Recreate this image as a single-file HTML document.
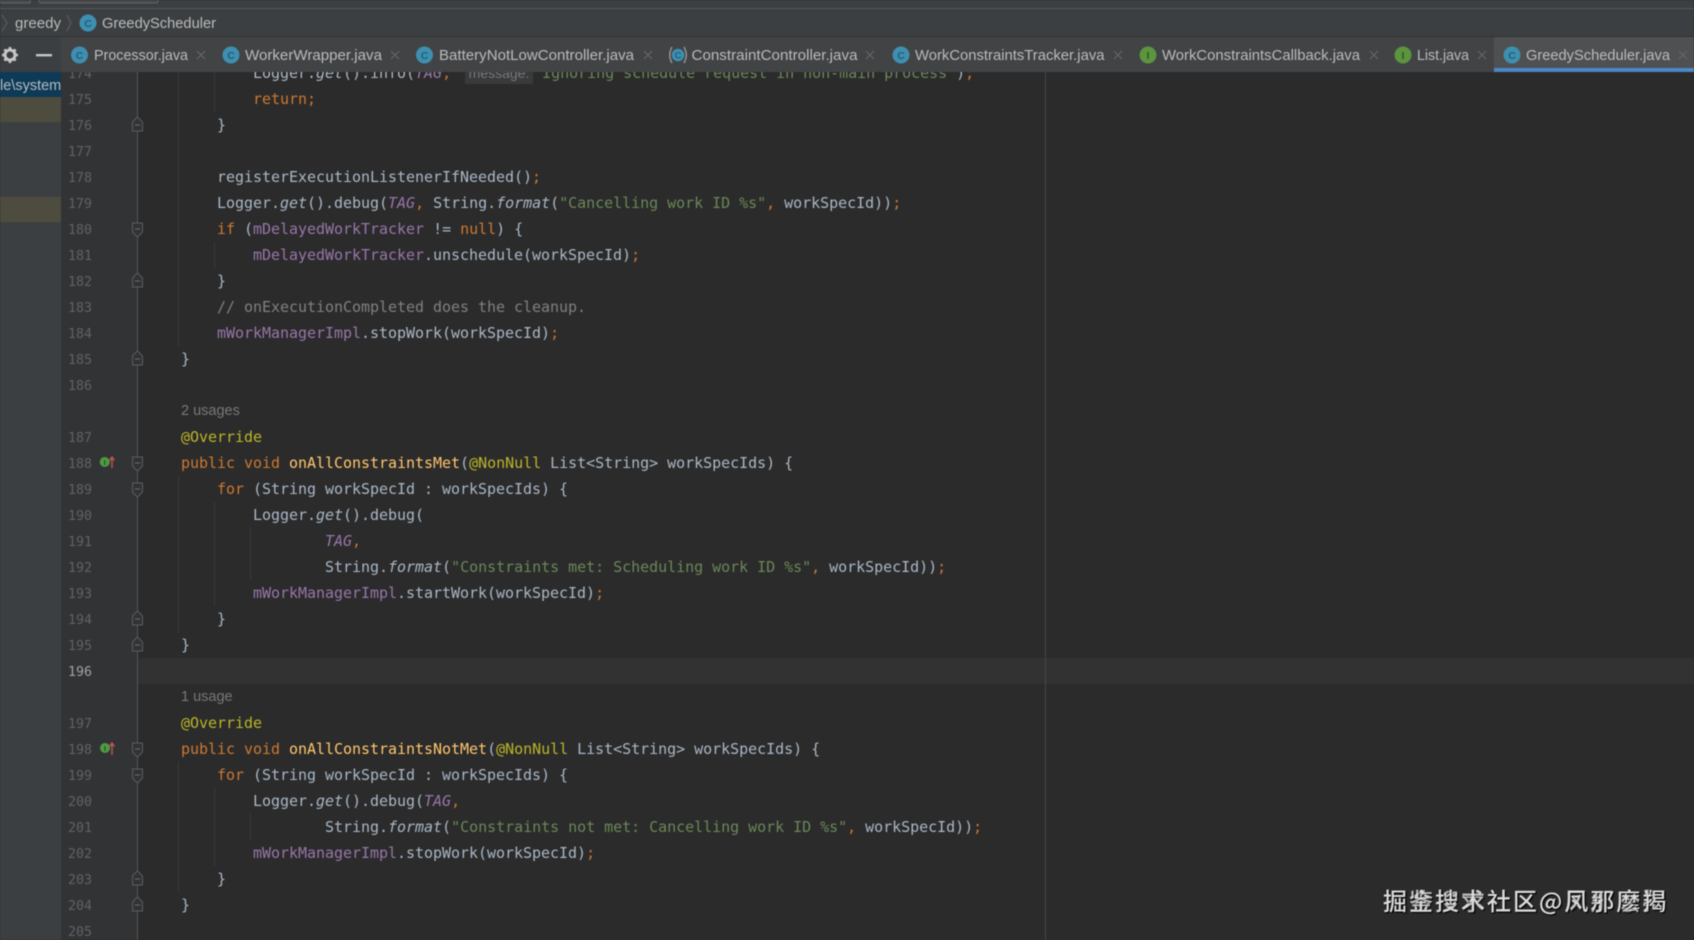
<!DOCTYPE html>
<html><head><meta charset="utf-8"><style>
html,body{margin:0;padding:0;background:#2b2b2b}
#r{position:relative;width:1694px;height:940px;overflow:hidden;background:#2b2b2b;filter:blur(.45px)}
.b{position:absolute}
pre{margin:0}
.l{position:absolute;left:181px;height:26px;font:15px/26px "DejaVu Sans Mono","Liberation Mono",monospace;letter-spacing:-.03px;color:#a9b7c6;white-space:pre}
.n{position:absolute;left:60px;width:32px;margin-top:2px;text-align:right;font:13.3px/26px "DejaVu Sans Mono","Liberation Mono",monospace;color:#606366}
.k{color:#cc7832}.s{color:#6a8759}.f{color:#9876aa}.t{color:#9876aa;font-style:italic}.i{font-style:italic}.m{color:#ffc66d}.a{color:#bbb529}.c{color:#808080}
.u{position:absolute;left:181px;font:14.5px/26px "Liberation Sans",sans-serif;color:#787878}
svg{position:absolute;left:0;top:0}
svg text{font-family:"Liberation Sans",sans-serif}
.wm{position:absolute;left:1383px;top:885px;font:500 24px/30px "Noto Sans CJK SC","WenQuanYi Zen Hei",sans-serif;color:#dcdcdc;white-space:pre;text-shadow:1px 1px 1px #000;letter-spacing:2px}
</style></head><body><div id="r">
<div class="b" style="left:137px;top:658px;width:1557px;height:26px;background:#323232"></div>
<div class="b" style="left:61px;top:72px;width:76px;height:868px;background:#313335"></div>
<div class="b" style="left:0;top:72px;width:61px;height:868px;background:#3c3f41"></div>
<div class="b" style="left:0;top:72px;width:61px;height:25px;background:#0d3a56"></div>
<div class="b" style="left:0;top:97px;width:61px;height:25px;background:#4d4c3e"></div>
<div class="b" style="left:0;top:197px;width:61px;height:25px;background:#4d4c3e"></div>
<div class="b" style="left:0;top:74px;width:61px;height:25px;font:14.5px/25px 'Liberation Sans',sans-serif;color:#b5bcc2;text-align:right;overflow:hidden;white-space:nowrap"><span>le\system</span></div>
<div class="b" style="left:1045px;top:72px;width:1px;height:868px;background:#464646"></div>
<div class="b" style="left:178px;top:72px;width:1px;height:274px;background:#393939"></div>
<div class="b" style="left:214px;top:72px;width:1px;height:40px;background:#393939"></div>
<div class="b" style="left:214px;top:242px;width:1px;height:26px;background:#393939"></div>
<div class="b" style="left:178px;top:476px;width:1px;height:157px;background:#393939"></div>
<div class="b" style="left:214px;top:502px;width:1px;height:104px;background:#393939"></div>
<div class="b" style="left:250px;top:528px;width:1px;height:52px;background:#393939"></div>
<div class="b" style="left:178px;top:762px;width:1px;height:131px;background:#393939"></div>
<div class="b" style="left:214px;top:788px;width:1px;height:78px;background:#393939"></div>
<div class="b" style="left:250px;top:814px;width:1px;height:26px;background:#393939"></div>

<div class="n" style="top:60px">174</div><div class="n" style="top:86px">175</div><div class="n" style="top:112px">176</div><div class="n" style="top:138px">177</div><div class="n" style="top:164px">178</div><div class="n" style="top:190px">179</div><div class="n" style="top:216px">180</div><div class="n" style="top:242px">181</div><div class="n" style="top:268px">182</div><div class="n" style="top:294px">183</div><div class="n" style="top:320px">184</div><div class="n" style="top:346px">185</div><div class="n" style="top:372px">186</div>
<div class="n" style="top:424px">187</div><div class="n" style="top:450px">188</div><div class="n" style="top:476px">189</div><div class="n" style="top:502px">190</div><div class="n" style="top:528px">191</div><div class="n" style="top:554px">192</div><div class="n" style="top:580px">193</div><div class="n" style="top:606px">194</div><div class="n" style="top:632px">195</div><div class="n" style="top:658px;color:#a4a3a3">196</div>
<div class="n" style="top:710px">197</div><div class="n" style="top:736px">198</div><div class="n" style="top:762px">199</div><div class="n" style="top:788px">200</div><div class="n" style="top:814px">201</div><div class="n" style="top:840px">202</div><div class="n" style="top:866px">203</div><div class="n" style="top:892px">204</div><div class="n" style="top:918px">205</div>

<pre class="l" style="top:60px">        Logger.<span class="i">get</span>().info(<span class="t">TAG</span><span class="k">,</span> <span style="display:inline-block;width:64px"></span> <span class="s">"Ignoring schedule request in non-main process"</span>)<span class="k">;</span></pre>
<div class="b" style="left:465px;top:62px;width:68px;height:22px;background:#3a3a3a;color:#787878;font:14px/22px 'Liberation Sans',sans-serif;text-align:center">message:</div>
<pre class="l" style="top:86px">        <span class="k">return;</span></pre>
<pre class="l" style="top:112px">    }</pre>
<pre class="l" style="top:164px">    registerExecutionListenerIfNeeded()<span class="k">;</span></pre>
<pre class="l" style="top:190px">    Logger.<span class="i">get</span>().debug(<span class="t">TAG</span><span class="k">,</span> String.<span class="i">format</span>(<span class="s">"Cancelling work ID %s"</span><span class="k">,</span> workSpecId))<span class="k">;</span></pre>
<pre class="l" style="top:216px">    <span class="k">if</span> (<span class="f">mDelayedWorkTracker</span> != <span class="k">null</span>) {</pre>
<pre class="l" style="top:242px">        <span class="f">mDelayedWorkTracker</span>.unschedule(workSpecId)<span class="k">;</span></pre>
<pre class="l" style="top:268px">    }</pre>
<pre class="l" style="top:294px">    <span class="c">// onExecutionCompleted does the cleanup.</span></pre>
<pre class="l" style="top:320px">    <span class="f">mWorkManagerImpl</span>.stopWork(workSpecId)<span class="k">;</span></pre>
<pre class="l" style="top:346px">}</pre>
<div class="u" style="top:398px">2 usages</div>
<pre class="l" style="top:424px"><span class="a">@Override</span></pre>
<pre class="l" style="top:450px"><span class="k">public void</span> <span class="m">onAllConstraintsMet</span>(<span class="a">@NonNull</span> List&lt;String&gt; workSpecIds) {</pre>
<pre class="l" style="top:476px">    <span class="k">for</span> (String workSpecId : workSpecIds) {</pre>
<pre class="l" style="top:502px">        Logger.<span class="i">get</span>().debug(</pre>
<pre class="l" style="top:528px">                <span class="t">TAG</span><span class="k">,</span></pre>
<pre class="l" style="top:554px">                String.<span class="i">format</span>(<span class="s">"Constraints met: Scheduling work ID %s"</span><span class="k">,</span> workSpecId))<span class="k">;</span></pre>
<pre class="l" style="top:580px">        <span class="f">mWorkManagerImpl</span>.startWork(workSpecId)<span class="k">;</span></pre>
<pre class="l" style="top:606px">    }</pre>
<pre class="l" style="top:632px">}</pre>
<div class="u" style="top:684px">1 usage</div>
<pre class="l" style="top:710px"><span class="a">@Override</span></pre>
<pre class="l" style="top:736px"><span class="k">public void</span> <span class="m">onAllConstraintsNotMet</span>(<span class="a">@NonNull</span> List&lt;String&gt; workSpecIds) {</pre>
<pre class="l" style="top:762px">    <span class="k">for</span> (String workSpecId : workSpecIds) {</pre>
<pre class="l" style="top:788px">        Logger.<span class="i">get</span>().debug(<span class="t">TAG</span><span class="k">,</span></pre>
<pre class="l" style="top:814px">                String.<span class="i">format</span>(<span class="s">"Constraints not met: Cancelling work ID %s"</span><span class="k">,</span> workSpecId))<span class="k">;</span></pre>
<pre class="l" style="top:840px">        <span class="f">mWorkManagerImpl</span>.stopWork(workSpecId)<span class="k">;</span></pre>
<pre class="l" style="top:866px">    }</pre>
<pre class="l" style="top:892px">}</pre>

<svg width="1694" height="940" viewBox="0 0 1694 940">
<rect x="0" y="0" width="1694" height="37" fill="#3c3f41"/>
<rect x="0" y="8" width="1694" height="1" fill="#555759"/>
<rect x="0" y="36" width="1694" height="1" fill="#2f3132"/>
<path d="M0 0V1.5Q0 3 2 3H30V0M39 0V1Q39 3 42 3H156Q158 3 158 1V0" fill="#46484a" stroke="#636567"/>
<path d="M2 15L7 23L2 31" fill="none" stroke="#5e6163"/>
<path d="M67 15L71 23L67 31" fill="none" stroke="#5e6163"/>
<text x="15" y="28" font-size="15" fill="#bbbbbb" textLength="46" lengthAdjust="spacingAndGlyphs">greedy</text>
<circle cx="88" cy="23" r="8.5" fill="#3f8fb0"/><text x="88" y="27" font-size="10.5" font-weight="bold" fill="#205f7c" text-anchor="middle">C</text>
<text x="102" y="28" font-size="15" fill="#bbbbbb" textLength="114" lengthAdjust="spacingAndGlyphs">GreedyScheduler</text>
<rect x="0" y="37" width="1694" height="35" fill="#3c3f41"/>
<rect x="61" y="37" width="1633" height="35" fill="#414345"/>
<rect x="1494" y="37" width="200" height="31" fill="#4e5052"/>
<rect x="1494" y="68" width="200" height="4" fill="#4a88c7"/>
<g transform="translate(10,55)"><circle r="5" fill="none" stroke="#c4c6c8" stroke-width="3"/><g stroke="#c4c6c8" stroke-width="2.6"><path d="M0-8V-5M0 5V8M-8 0H-5M5 0H8M-5.6-5.6L-3.6-3.6M3.6 3.6L5.6 5.6M-5.6 5.6L-3.6 3.6M3.6-3.6L5.6-5.6"/></g></g>
<rect x="36" y="54" width="16" height="2.4" fill="#c4c6c8"/>
<g font-size="15" fill="#b9bbbd">
<circle cx="79.5" cy="55" r="8.5" fill="#3f8fb0"/><text x="79.5" y="59" font-size="10.5" font-weight="bold" fill="#205f7c" text-anchor="middle">C</text>
<text x="94" y="60" textLength="94" lengthAdjust="spacingAndGlyphs">Processor.java</text>
<circle cx="231" cy="55" r="8.5" fill="#3f8fb0"/><text x="231" y="59" font-size="10.5" font-weight="bold" fill="#205f7c" text-anchor="middle">C</text>
<text x="245" y="60" textLength="137" lengthAdjust="spacingAndGlyphs">WorkerWrapper.java</text>
<circle cx="424.5" cy="55" r="8.5" fill="#3f8fb0"/><text x="424.5" y="59" font-size="10.5" font-weight="bold" fill="#205f7c" text-anchor="middle">C</text>
<text x="439" y="60" textLength="195" lengthAdjust="spacingAndGlyphs">BatteryNotLowController.java</text>
<circle cx="678" cy="55" r="6.3" fill="#3f8fb0"/><path d="M672 47Q667.5 55 672 63M684 47Q688.5 55 684 63" fill="none" stroke="#909294" stroke-width="1.5"/><text x="678" y="58.5" font-size="9.5" font-weight="bold" fill="#205f7c" text-anchor="middle">C</text>
<text x="691.5" y="60" textLength="166" lengthAdjust="spacingAndGlyphs">ConstraintController.java</text>
<circle cx="901" cy="55" r="8.5" fill="#3f8fb0"/><text x="901" y="59" font-size="10.5" font-weight="bold" fill="#205f7c" text-anchor="middle">C</text>
<text x="915" y="60" textLength="189.5" lengthAdjust="spacingAndGlyphs">WorkConstraintsTracker.java</text>
<circle cx="1148" cy="55" r="8.5" fill="#5c9440"/><text x="1148" y="59" font-size="10.5" font-weight="bold" fill="#2c5a1c" text-anchor="middle">I</text>
<text x="1162" y="60" textLength="198" lengthAdjust="spacingAndGlyphs">WorkConstraintsCallback.java</text>
<circle cx="1403" cy="55" r="8.5" fill="#5c9440"/><text x="1403" y="59" font-size="10.5" font-weight="bold" fill="#2c5a1c" text-anchor="middle">I</text>
<text x="1417" y="60" textLength="52" lengthAdjust="spacingAndGlyphs">List.java</text>
<circle cx="1512" cy="55" r="8.5" fill="#3f8fb0"/><text x="1512" y="59" font-size="10.5" font-weight="bold" fill="#205f7c" text-anchor="middle">C</text>
<text x="1526" y="60" textLength="144" lengthAdjust="spacingAndGlyphs">GreedyScheduler.java</text>
</g>
<g stroke="#66686a" stroke-width="1.1" fill="none">
<path d="M197 51l8 8m0-8l-8 8M391 51l8 8m0-8l-8 8M644 51l8 8m0-8l-8 8M866 51l8 8m0-8l-8 8M1114 51l8 8m0-8l-8 8M1370 51l8 8m0-8l-8 8M1478 51l8 8m0-8l-8 8M1679 51l8 8m0-8l-8 8"/>
</g>
<rect x="137" y="72" width="1" height="868" fill="#525456"/>
<g fill="#313335" stroke="#5a5c5e" stroke-width="1">
<path d="M132.5 131v-9l5-5l5 5v9z"/><path d="M132.5 287v-9l5-5l5 5v9z"/><path d="M132.5 365v-9l5-5l5 5v9z"/><path d="M132.5 625v-9l5-5l5 5v9z"/><path d="M132.5 651v-9l5-5l5 5v9z"/><path d="M132.5 885v-9l5-5l5 5v9z"/><path d="M132.5 911v-9l5-5l5 5v9z"/>
<path d="M132.5 223v9l5 5l5-5v-9z"/><path d="M132.5 457v9l5 5l5-5v-9z"/><path d="M132.5 483v9l5 5l5-5v-9z"/><path d="M132.5 743v9l5 5l5-5v-9z"/><path d="M132.5 769v9l5 5l5-5v-9z"/>
</g>
<g stroke="#6a6c6e" stroke-width="1"><path d="M135 125h5M135 281h5M135 359h5M135 619h5M135 645h5M135 879h5M135 905h5M135 229h5M135 463h5M135 489h5M135 749h5M135 775h5"/></g>
<g><circle cx="104.7" cy="462" r="5" fill="#4f9a45"/><text x="104.7" y="465" font-size="7" font-weight="bold" fill="#1e4a1a" text-anchor="middle">I</text><path d="M112 468V458M109.5 460.5L112 457L114.5 460.5" fill="none" stroke="#c75450" stroke-width="1.4"/></g>
<g><circle cx="105" cy="748" r="5" fill="#4f9a45"/><text x="105" y="751" font-size="7" font-weight="bold" fill="#1e4a1a" text-anchor="middle">I</text><path d="M112 755V744M109.5 746.5L112 743L114.5 746.5" fill="none" stroke="#c75450" stroke-width="1.4"/></g>
</svg>
<div class="wm">掘金技术社区@凤邪摩羯</div>
<div class="wm" style="opacity:.8">掘鉴搜求社区@风那麽揭</div>
</div></body></html>
